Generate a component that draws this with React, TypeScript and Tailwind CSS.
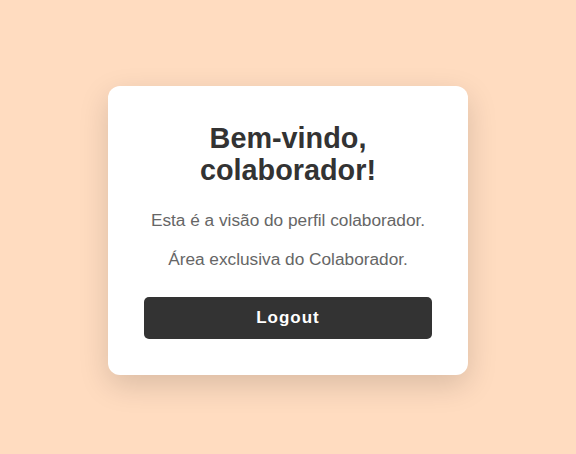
export default function App() {
  return (
    <div
      className="min-h-screen w-full bg-[#ffdcc0] flex justify-center pt-[86px]"
      style={{ fontFamily: '"Liberation Sans", Arial, sans-serif' }}
    >
      <div className="w-[360px] h-fit bg-white rounded-[12px] px-[36px] pt-[36px] pb-[36px] shadow-[0_10px_30px_rgba(0,0,0,0.15)] flex flex-col items-center text-center">
        <h1 className="text-[28.8px] leading-[32px] font-bold text-[#333333]">
          Bem-vindo,
          <br />
          colaborador!
        </h1>
        <p className="mt-[22px] text-[17.25px] leading-[24px] text-[#666666]">
          Esta é a visão do perfil colaborador.
        </p>
        <p className="mt-[15px] text-[17.25px] leading-[24px] text-[#666666]">
          Área exclusiva do Colaborador.
        </p>
        <button className="mt-[26px] w-full h-[42px] rounded-[5px] bg-[#333333] text-white text-[17px] font-bold tracking-[1px]">
          Logout
        </button>
      </div>
    </div>
  );
}
